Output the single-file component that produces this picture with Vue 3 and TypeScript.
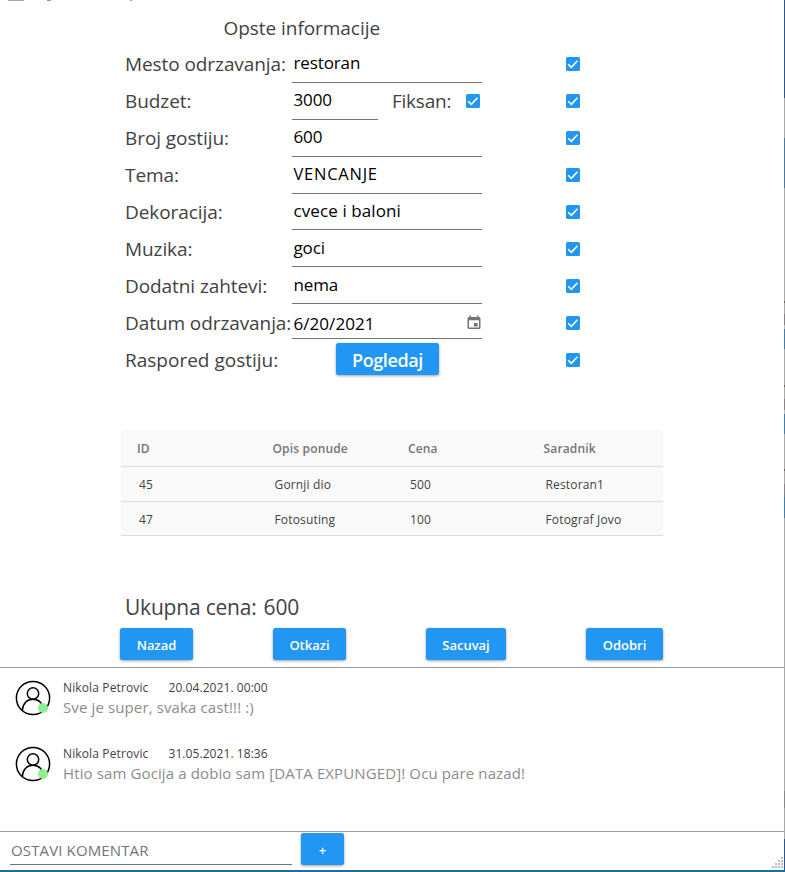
<script setup lang="ts">
import { ref } from 'vue'

interface Field {
  key: string
  label: string
  value: string
  kind: 'text' | 'budget' | 'date' | 'button'
}

const fields = ref<Field[]>([
  { key: 'mesto', label: 'Mesto odrzavanja:', value: 'restoran', kind: 'text' },
  { key: 'budzet', label: 'Budzet:', value: '3000', kind: 'budget' },
  { key: 'gosti', label: 'Broj gostiju:', value: '600', kind: 'text' },
  { key: 'tema', label: 'Tema:', value: 'VENCANJE', kind: 'text' },
  { key: 'dekoracija', label: 'Dekoracija:', value: 'cvece i baloni', kind: 'text' },
  { key: 'muzika', label: 'Muzika:', value: 'goci', kind: 'text' },
  { key: 'zahtevi', label: 'Dodatni zahtevi:', value: 'nema', kind: 'text' },
  { key: 'datum', label: 'Datum odrzavanja:', value: '6/20/2021', kind: 'date' },
  { key: 'raspored', label: 'Raspored gostiju:', value: 'Pogledaj', kind: 'button' },
])

const offers = [
  { id: 45, opis: 'Gornji dio', cena: 500, saradnik: 'Restoran1' },
  { id: 47, opis: 'Fotosuting', cena: 100, saradnik: 'Fotograf Jovo' },
]

const comments = [
  { author: 'Nikola Petrovic', time: '20.04.2021. 00:00', text: 'Sve je super, svaka cast!!! :)' },
  { author: 'Nikola Petrovic', time: '31.05.2021. 18:36', text: 'Htio sam Gocija a dobio sam [DATA EXPUNGED]! Ocu pare nazad!' },
]
const gripDots = [[9, 0], [6, 3], [9, 3], [3, 6], [6, 6], [9, 6], [0, 9], [3, 9], [6, 9], [9, 9]]
</script>

<template>
  <div class="window">
    <svg class="titlebits" width="140" height="2" viewBox="0 0 140 2">
      <path d="M8 0h16v1H8z" fill="#aaa" />
      <path d="M47 0h4v1h-4zM130 0h2v1h-2z" fill="#999" />
    </svg>
    <main class="form">
      <h1 class="title"><span>Opste informacije</span></h1>
      <div v-for="f in fields" :key="f.key" class="row">
        <span class="label" :class="f.key">{{ f.label }}</span>
        <div class="control" :class="f.kind">
          <button v-if="f.kind === 'button'" class="btn large">{{ f.value }}</button>
          <template v-else>
            <div class="field"><span :class="'v-' + f.key">{{ f.value }}</span>
              <svg v-if="f.kind === 'date'" class="cal" width="14" height="15" viewBox="0 0 14 15">
                <path fill="#757575" fill-rule="evenodd" d="M2.5 0.5h1.5v1.5h6V.5h1.5V2h.5a1.5 1.5 0 0 1 1.5 1.5v9A1.5 1.5 0 0 1 12 14H2a1.5 1.5 0 0 1-1.5-1.500v-9A1.5 1.5 0 0 1 2 2h.5zM2 5.2v7.3h10V5.2zM7 8h3.6v3.6H7z" />
              </svg>
            </div>
            <template v-if="f.kind === 'budget'">
              <span class="label fiksan">Fiksan:</span>
              <svg class="check" width="14" height="14" viewBox="0 0 14 14"><rect width="14" height="14" rx="1.6" /><path d="M2.2 7.2l3.1 3.1 6.2-6.5" /></svg>
            </template>
          </template>
        </div>
        <svg class="check" width="14" height="14" viewBox="0 0 14 14"><rect width="14" height="14" rx="1.6" /><path d="M2.2 7.2l3.1 3.1 6.2-6.5" /></svg>
      </div>

      <div class="table">
        <div class="tr head"><b>ID</b><b>Opis ponude</b><b>Cena</b><b>Saradnik</b></div>
        <div v-for="o in offers" :key="o.id" class="tr">
          <span>{{ o.id }}</span><span>{{ o.opis }}</span><span>{{ o.cena }}</span><span>{{ o.saradnik }}</span>
        </div>
      </div>

      <p class="total"><span>Ukupna cena:</span><span>600</span></p>
      <div class="actions">
        <button class="btn nazad">Nazad</button>
        <button class="btn otkazi">Otkazi</button>
        <button class="btn sacuvaj">Sacuvaj</button>
        <button class="btn odobri">Odobri</button>
      </div>
    </main>

    <section class="comments">
      <article v-for="c in comments" :key="c.time" class="comment">
        <svg width="36" height="36" viewBox="0 0 36 36" fill="none" stroke="#000" stroke-width="1.5">
          <circle cx="18" cy="18" r="16.6" />
          <circle cx="18" cy="13.5" r="5.7" />
          <path d="M7.3 30.5C7.8 23.5 12 19.2 18 19.2S28.2 23.5 28.7 30.5" />
          <circle cx="28" cy="28" r="5" fill="#90ee90" stroke="none" />
        </svg>
        <div>
          <div class="meta"><span>{{ c.author }}</span><span class="time">{{ c.time }}</span></div>
          <p class="message">{{ c.text }}</p>
        </div>
      </article>
    </section>

    <footer class="composer">
      <div class="entry"><span>OSTAVI KOMENTAR</span></div>
      <button class="btn plus">+</button>
    </footer>
    <svg class="grip" width="11" height="11" viewBox="0 0 11 11">
      <rect v-for="(d, i) in gripDots" :key="i" :x="d[0]" :y="d[1]" width="2" height="2" fill="#b9bdca" />
    </svg>
    <div class="edge"></div>
  </div>
</template>

<style>
body { background: #fff; overflow: hidden; }
</style>

<style scoped>
* { box-sizing: border-box; }
.window {
  position: relative;
  width: 785px;
  height: 872px;
  display: flex;
  flex-direction: column;
  border-bottom: 2px solid #1c6ca6;
  font-family: 'Open Sans', 'Noto Sans', sans-serif;
  color: #424242;
  white-space: nowrap;
  overflow: hidden;
}
.titlebits { position: absolute; left: 0; top: 0; }
.form { height: 667px; padding: 9.95px 122px 0 121px; flex: none; }
.title { margin: 0; height: 36px; padding-left: 102.5px; font-size: 19px; font-weight: 400; line-height: 36px; letter-spacing: -0.05px; }
.row { display: flex; height: 36.9px; align-items: center; }
.label { width: 171px; padding-left: 4px; flex: none; font-size: 19px; line-height: 36px; letter-spacing: -0.08px; }
.label.raspored { letter-spacing: 0; }
.control { display: flex; width: 274px; height: 100%; align-items: center; flex: none; }
.field {
  width: 190px;
  height: 100%;
  padding: 0 1px 2px 1.5px;
  display: flex;
  align-items: center;
  justify-content: space-between;
  border-bottom: 1px solid #757575;
  font-size: 17px;
  letter-spacing: -0.12px;
  color: #000;
}
.v-tema { font-size: 16.5px; letter-spacing: 0.75px; }
.v-dekoracija { letter-spacing: 0.1px; }
.v-datum { letter-spacing: 0.05px; padding-top: 3px; }
.budget .field { width: 86px; }
.date .field { height: 32px; padding: 0 1px 0 1.5px; }
.date { align-items: flex-start; padding-top: 2.5px; }
.cal { margin-top: 1px; }
.label.fiksan { width: 88px; padding-left: 14px; letter-spacing: -0.24px; }
.control.button { padding-left: 44px; padding-bottom: 1px; }
.check rect { fill: #2196f3; }
.check path { fill: none; stroke: #fff; stroke-width: 1.6; }
.btn {
  height: 32px;
  padding: 0;
  border: 0;
  border-radius: 2.5px;
  background: #2196f3;
  color: #fff;
  font: 600 13px/34px 'Open Sans', 'Noto Sans', sans-serif;
  box-shadow: 0 1px 3px rgba(0, 0, 0, 0.38);
}
.btn.large { width: 103px; font-size: 18px; font-weight: 600; letter-spacing: -0.4px; line-height: 35px; }

.table { margin-top: 52px; background: #fafafa; border-radius: 4px 4px 0 0; font-size: 12px; letter-spacing: 0.16px; }
.tr { display: grid; grid-template-columns: repeat(4, 135.5px); height: 35px; line-height: 36px; border-bottom: 1px solid #dcdcdc; }
.tr:last-child { height: 34px; }
.tr.head { height: 37px; line-height: 38px; color: #757575; }
.tr b { padding-left: 16px; font-weight: 600; }
.tr span { padding-left: 18px; }
.total { display: flex; gap: 7px; margin: 57px 0 7px; padding-left: 4px; font-size: 21px; line-height: 28px; letter-spacing: -0.2px; }
.actions { display: flex; margin-left: -1px; }
.nazad { width: 73px; margin-right: 80px; }
.otkazi { width: 73px; margin-right: 80px; }
.sacuvaj { width: 80px; margin-right: 80px; }
.odobri { width: 77px; }

.comments { height: 165px; flex: none; width: 784px; padding: 13px 15px 0; border-top: 1px solid #9e9e9e; border-bottom: 1px solid #9e9e9e; }
.comment { display: flex; height: 66px; gap: 12px; }
.comment > svg { margin-top: -1px; flex: none; }
.meta { display: flex; height: 17px; margin-top: -2px; font-size: 12px; line-height: 17px; letter-spacing: 0.13px; }
.meta .time { margin-left: 20px; letter-spacing: 0.07px; }
.message { margin: 0; font-size: 15px; line-height: 22px; color: #8c8c8c; letter-spacing: 0.12px; }
.composer { display: flex; padding: 1px 0 0 10px; }
.entry { width: 282px; height: 32px; margin-right: 9px; padding-left: 1px; border-bottom: 1px solid #757575; font-size: 15px; line-height: 34px; letter-spacing: 0.13px; color: #757575; }
.plus { width: 43px; }
.grip { position: absolute; left: 772px; top: 857px; }
.edge {
  position: absolute;
  top: 0;
  right: 0;
  width: 1px;
  height: 870px;
  background: linear-gradient(#285793 0 98px, #aaa 98px 138px, #467ba5 138px 188px, #aaa 188px 301px, #755c55 301px 303px, #aaa 303px 314px, #8a8286 314px 325px, #bbb 325px 329px, #3d80b0 329px 349px, #aaa 349px 385px, #755c55 385px 387px, #aaa 387px 399px, #8a8286 399px 410px, #bbb 410px 414px, #3d80b0 414px 434px, #aaa 434px 469px, #755c55 469px 471px, #aaa 471px 484px, #8a8286 484px 495px, #3d80b0 498px 518px, #aaa 518px 791px, #888 791px 808px, #aaa 808px 839px, #285793 839px);
}
</style>
